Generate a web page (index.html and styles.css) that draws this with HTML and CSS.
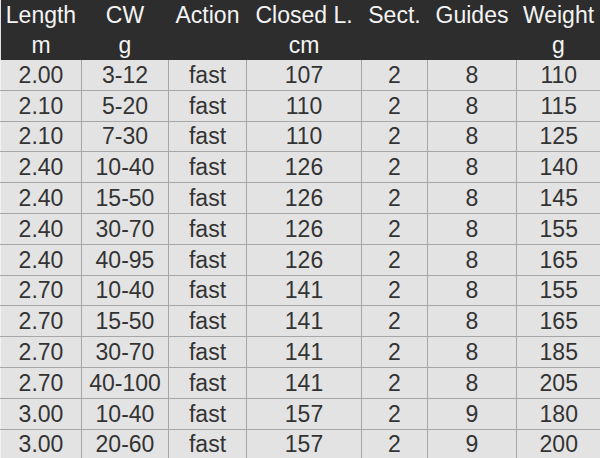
FILE: index.html
```html
<!DOCTYPE html>
<html>
<head>
<meta charset="utf-8">
<link rel="stylesheet" href="styles.css">
</head>
<body>
<table class="specs">
  <colgroup>
    <col class="c1"><col class="c2"><col class="c3"><col class="c4"><col class="c5"><col class="c6"><col class="c7">
  </colgroup>
  <thead>
    <tr>
      <th>Length<br>m</th>
      <th>CW<br>g</th>
      <th>Action<br>&nbsp;</th>
      <th>Closed L.<br>cm</th>
      <th>Sect.<br>&nbsp;</th>
      <th>Guides<br>&nbsp;</th>
      <th>Weight<br>g</th>
    </tr>
  </thead>
  <tbody>
    <tr><td>2.00</td><td>3-12</td><td>fast</td><td>107</td><td>2</td><td>8</td><td>110</td></tr>
    <tr><td>2.10</td><td>5-20</td><td>fast</td><td>110</td><td>2</td><td>8</td><td>115</td></tr>
    <tr><td>2.10</td><td>7-30</td><td>fast</td><td>110</td><td>2</td><td>8</td><td>125</td></tr>
    <tr><td>2.40</td><td>10-40</td><td>fast</td><td>126</td><td>2</td><td>8</td><td>140</td></tr>
    <tr><td>2.40</td><td>15-50</td><td>fast</td><td>126</td><td>2</td><td>8</td><td>145</td></tr>
    <tr><td>2.40</td><td>30-70</td><td>fast</td><td>126</td><td>2</td><td>8</td><td>155</td></tr>
    <tr><td>2.40</td><td>40-95</td><td>fast</td><td>126</td><td>2</td><td>8</td><td>165</td></tr>
    <tr><td>2.70</td><td>10-40</td><td>fast</td><td>141</td><td>2</td><td>8</td><td>155</td></tr>
    <tr><td>2.70</td><td>15-50</td><td>fast</td><td>141</td><td>2</td><td>8</td><td>165</td></tr>
    <tr><td>2.70</td><td>30-70</td><td>fast</td><td>141</td><td>2</td><td>8</td><td>185</td></tr>
    <tr><td>2.70</td><td>40-100</td><td>fast</td><td>141</td><td>2</td><td>8</td><td>205</td></tr>
    <tr><td>3.00</td><td>10-40</td><td>fast</td><td>157</td><td>2</td><td>9</td><td>180</td></tr>
    <tr><td>3.00</td><td>20-60</td><td>fast</td><td>157</td><td>2</td><td>9</td><td>200</td></tr>
  </tbody>
</table>
</body>
</html>
```
FILE: styles.css
```css
html, body {
  margin: 0;
  padding: 0;
  background: #e3e3e3;
  overflow: hidden;
}
.specs {
  width: 600px;
  table-layout: fixed;
  border-collapse: collapse;
  font-family: "Liberation Sans", Arial, sans-serif;
  font-size: 23px;
  text-align: center;
}
.c1 { width: 81px; }
.c2 { width: 87px; }
.c3 { width: 78px; }
.c4 { width: 115px; }
.c5 { width: 66px; }
.c6 { width: 89px; }
.c7 { width: 84px; }
.specs th {
  background: #2d2d2d;
  color: #f4f4f4;
  font-weight: normal;
  line-height: 30px;
  height: 60px;
  padding: 0;
  white-space: nowrap;
  border: none;
}
.specs td {
  background: #e3e3e3;
  color: #333333;
  border: 1px solid #a6a6a6;
  padding: 0;
  height: 29.8px;
  line-height: 26px;
}
.specs tbody tr:first-child td { border-top: none; }
.specs td:first-child { border-left: 1px solid #f2f2f2; }
.specs td:last-child { border-right: none; }
```
